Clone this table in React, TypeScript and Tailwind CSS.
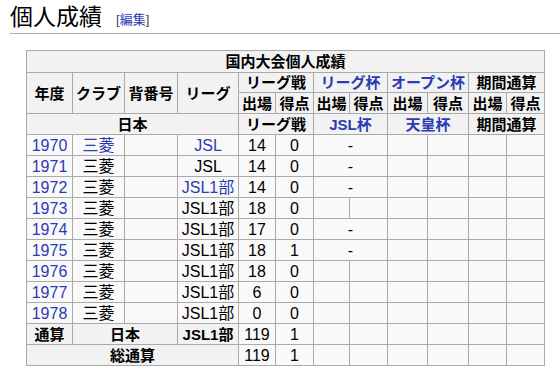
import React from "react";

const F = { fontFamily: '"Liberation Sans", "Noto Sans CJK JP", sans-serif' };
const LINK = "text-[#2b3bb3]";

const th = "border border-[#aaaaaa] bg-[#f2f2f2] font-bold text-center text-[15px] px-[2px] py-0 leading-[19px] whitespace-nowrap";
const td = "border border-[#aaaaaa] text-center px-[3px] py-0 leading-[19px] whitespace-nowrap";

type Row = {
  year: string;
  clubLink: boolean;
  league: string;
  leagueLink: boolean;
  apps: string;
  goals: string;
  dash: boolean;
};

const rows: Row[] = [
  { year: "1970", clubLink: true, league: "JSL", leagueLink: true, apps: "14", goals: "0", dash: true },
  { year: "1971", clubLink: false, league: "JSL", leagueLink: false, apps: "14", goals: "0", dash: true },
  { year: "1972", clubLink: false, league: "JSL1部", leagueLink: true, apps: "14", goals: "0", dash: true },
  { year: "1973", clubLink: false, league: "JSL1部", leagueLink: false, apps: "18", goals: "0", dash: false },
  { year: "1974", clubLink: false, league: "JSL1部", leagueLink: false, apps: "17", goals: "0", dash: true },
  { year: "1975", clubLink: false, league: "JSL1部", leagueLink: false, apps: "18", goals: "1", dash: true },
  { year: "1976", clubLink: false, league: "JSL1部", leagueLink: false, apps: "18", goals: "0", dash: false },
  { year: "1977", clubLink: false, league: "JSL1部", leagueLink: false, apps: "6", goals: "0", dash: false },
  { year: "1978", clubLink: false, league: "JSL1部", leagueLink: false, apps: "0", goals: "0", dash: false },
];

function Empties({ n }: { n: number }) {
  return (
    <>
      {Array.from({ length: n }).map((_, i) => (
        <td key={i} className={td}></td>
      ))}
    </>
  );
}

export default function App() {
  return (
    <div className="w-[560px] h-[378px] bg-white text-black overflow-hidden" style={F}>
      <div className="pl-[10px]">
        <h2 className="flex items-end border-b border-[#aaaaaa] pt-[3px] pb-[2px] h-[34px]">
          <span className="text-[23px] leading-[28px] font-normal">個人成績</span>
          <span className="ml-[14px] mb-[3px] text-[13px] leading-[16px] text-[#444]">
            [<span className={LINK}>編集</span>]
          </span>
        </h2>
      </div>
      <div className="pl-[26px] pt-[16px]">
        <table className="border-collapse bg-[#f9f9f9] text-[16px] table-fixed w-[518px]">
          <colgroup>
            <col className="w-[46px]" />
            <col className="w-[52px]" />
            <col className="w-[53px]" />
            <col className="w-[61px]" />
            <col className="w-[37px]" />
            <col className="w-[38px]" />
            <col className="w-[36px]" />
            <col className="w-[38px]" />
            <col className="w-[40px]" />
            <col className="w-[41px]" />
            <col className="w-[38px]" />
            <col className="w-[38px]" />
          </colgroup>
          <tbody>
            <tr className="h-[22px]">
              <th className={th} colSpan={12}>国内大会個人成績</th>
            </tr>
            <tr className="h-[20px]">
              <th className={th} rowSpan={2}>年度</th>
              <th className={th} rowSpan={2}>クラブ</th>
              <th className={th} rowSpan={2}>背番号</th>
              <th className={th} rowSpan={2}>リーグ</th>
              <th className={th} colSpan={2}>リーグ戦</th>
              <th className={`${th} ${LINK}`} colSpan={2}>リーグ杯</th>
              <th className={`${th} ${LINK}`} colSpan={2}>オープン杯</th>
              <th className={th} colSpan={2}>期間通算</th>
            </tr>
            <tr className="h-[21px]">
              <th className={th}>出場</th>
              <th className={th}>得点</th>
              <th className={th}>出場</th>
              <th className={th}>得点</th>
              <th className={th}>出場</th>
              <th className={th}>得点</th>
              <th className={th}>出場</th>
              <th className={th}>得点</th>
            </tr>
            <tr className="h-[21px]">
              <th className={th} colSpan={4}>日本</th>
              <th className={th} colSpan={2}>リーグ戦</th>
              <th className={`${th} ${LINK}`} colSpan={2}>JSL杯</th>
              <th className={`${th} ${LINK}`} colSpan={2}>天皇杯</th>
              <th className={th} colSpan={2}>期間通算</th>
            </tr>
            {rows.map((r) => (
              <tr key={r.year} className="h-[21px]">
                <td className={`${td} ${LINK}`}>{r.year}</td>
                <td className={`${td} ${r.clubLink ? LINK : ""}`}>三菱</td>
                <td className={td}></td>
                <td className={`${td} ${r.leagueLink ? LINK : ""}`}>{r.league}</td>
                <td className={td}>{r.apps}</td>
                <td className={td}>{r.goals}</td>
                {r.dash ? (
                  <td className={td} colSpan={2}>-</td>
                ) : (
                  <Empties n={2} />
                )}
                <Empties n={4} />
              </tr>
            ))}
            <tr className="h-[21px]">
              <th className={th}>通算</th>
              <th className={th} colSpan={2}>日本</th>
              <th className={th}>JSL1部</th>
              <td className={td}>119</td>
              <td className={td}>1</td>
              <Empties n={6} />
            </tr>
            <tr className="h-[21px]">
              <th className={th} colSpan={4}>総通算</th>
              <td className={td}>119</td>
              <td className={td}>1</td>
              <Empties n={6} />
            </tr>
          </tbody>
        </table>
      </div>
    </div>
  );
}
